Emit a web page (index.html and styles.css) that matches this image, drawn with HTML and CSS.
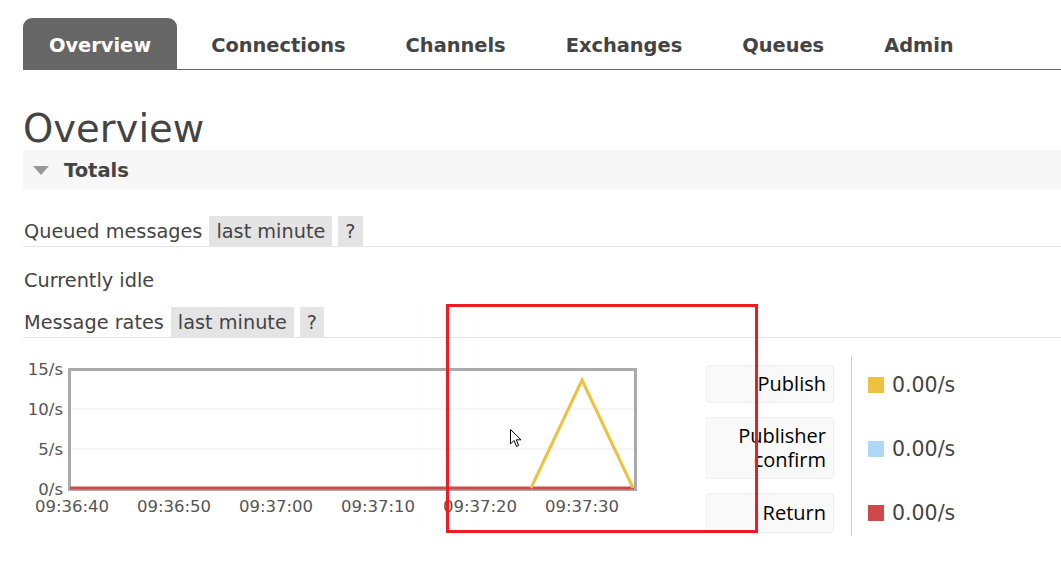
FILE: index.html
```html
<!DOCTYPE html>
<html>
<head>
<meta charset="utf-8">
<link rel="stylesheet" href="styles.css">
</head>
<body>
<div class="page">
  <ul class="tabs">
    <li class="tab active">Overview</li>
    <li class="tab">Connections</li>
    <li class="tab">Channels</li>
    <li class="tab">Exchanges</li>
    <li class="tab">Queues</li>
    <li class="tab">Admin</li>
  </ul>
  <h1 class="title">Overview</h1>
  <div class="section-head"><span class="tri"></span><span class="section-name">Totals</span></div>

  <div class="row row-queued"><span class="label">Queued messages</span><span class="badge">last minute</span><span class="badge q">?</span></div>
  <div class="idle">Currently idle</div>
  <div class="row"><span class="label">Message rates</span><span class="badge">last minute</span><span class="badge q">?</span></div>

  <div class="chart-row">
    <svg class="chart" width="666" height="170" viewBox="0 0 666 170">
      <line x1="46" y1="55" x2="610" y2="55" stroke="#ececec" stroke-width="1"/>
      <line x1="46" y1="95" x2="610" y2="95" stroke="#ececec" stroke-width="1"/>
      <rect x="45.5" y="15.5" width="566" height="120" fill="none" stroke="#aaaaaa" stroke-width="3"/>
      <line x1="46" y1="134" x2="610" y2="134" stroke="#cb4b4b" stroke-width="3"/>
      <polyline points="507,134 558,26 609,134" fill="none" stroke="#edc240" stroke-width="3" stroke-linejoin="miter"/>
      <g class="ylab" text-anchor="end">
        <text x="39" y="21">15/s</text>
        <text x="39" y="61">10/s</text>
        <text x="39" y="101">5/s</text>
        <text x="39" y="141">0/s</text>
      </g>
      <g class="xlab" text-anchor="middle">
        <text x="48" y="158">09:36:40</text>
        <text x="150" y="158">09:36:50</text>
        <text x="252" y="158">09:37:00</text>
        <text x="354" y="158">09:37:10</text>
        <text x="456" y="158">09:37:20</text>
        <text x="558" y="158">09:37:30</text>
      </g>
    </svg>
    <div class="legend">
      <div class="lbtn b1">Publish</div>
      <div class="lbtn b2"><span>Publisher</span><span>confirm</span></div>
      <div class="lbtn b3">Return</div>
    </div>
    <div class="values">
      <div class="val v1"><span class="sw yellow"></span>0.00/s</div>
      <div class="val v2"><span class="sw blue"></span>0.00/s</div>
      <div class="val v3"><span class="sw red"></span>0.00/s</div>
    </div>
  </div>
</div>

<div class="annot"></div>
<svg class="cursor" width="13" height="19" viewBox="0 0 13 19">
  <path d="M0.5 0.5 L0.5 15 L4 11.5 L6.5 17.5 L8.7 16.6 L6.3 10.8 L11 10.8 Z" fill="#ffffff" stroke="#000000" stroke-width="1" stroke-linejoin="round"/>
</svg>
</body>
</html>
```

FILE: styles.css
```css
html, body {
  margin: 0;
  padding: 0;
  background: #ffffff;
}
body {
  font-family: "DejaVu Sans", Verdana, sans-serif;
  color: #444444;
  position: relative;
  width: 1061px;
  height: 566px;
  overflow: hidden;
}
.page {
  padding-left: 23px;
  padding-top: 18px;
}
.tabs {
  list-style: none;
  margin: 0;
  padding: 0;
  display: flex;
  gap: 8px;
  height: 51px;
  border-bottom: 1px solid #666666;
}
.tab {
  padding: 3px 26px 0;
  box-sizing: border-box;
  font-weight: bold;
  font-size: 19.4px;
  color: #444444;
  display: flex;
  align-items: center;
  height: 51px;
  border-radius: 9px 9px 0 0;
}
.tab.active {
  background: #666666;
  color: #ffffff;
}
.title {
  margin: 0;
  font-weight: normal;
  font-size: 38.5px;
  line-height: 44px;
  height: 44px;
  margin-top: 37px;
  color: #444444;
}
.section-head {
  margin-top: -1px;
  background: #f7f7f7;
  height: 40px;
  display: flex;
  align-items: center;
}
.tri {
  width: 0;
  height: 0;
  border-left: 8px solid transparent;
  border-right: 8px solid transparent;
  border-top: 9px solid #999999;
  margin-left: 10px;
  margin-right: 15px;
  margin-top: 1px;
}
.section-name {
  font-weight: bold;
  font-size: 19.5px;
  color: #444444;
}
.row {
  display: flex;
  align-items: stretch;
  height: 30px;
  border-bottom: 1px solid #e4e4e4;
  font-size: 19.3px;
}
.row-queued {
  margin-top: 26px;
}
.label {
  display: flex;
  align-items: center;
  padding-left: 1px;
  margin-right: 7px;
}
.badge {
  background: #e4e4e4;
  display: flex;
  align-items: center;
  padding: 0 7px;
  margin-right: 6px;
}
.idle {
  font-size: 19.3px;
  height: 30px;
  display: flex;
  align-items: center;
  margin-top: 18px;
  padding-left: 1px;
  margin-bottom: 12px;
}
.chart-row {
  display: flex;
  margin-top: 16px;
}
.chart {
  display: block;
  margin-left: 1px;
  flex: none;
}
.chart text {
  font-family: "DejaVu Sans", Verdana, sans-serif;
  font-size: 16.5px;
  fill: #555555;
}
.legend {
  margin-left: 16px;
  margin-top: 11px;
  width: 128px;
  display: flex;
  flex-direction: column;
  gap: 14px;
}
.lbtn {
  box-sizing: border-box;
  background: #f9f9f9;
  border: 1px solid #eeeeee;
  border-radius: 4px;
  text-align: right;
  padding: 0 7px;
  font-family: "Open Sans", "Noto Sans", sans-serif;
  font-size: 20px;
  color: #000000;
  display: flex;
  flex-direction: column;
  justify-content: center;
  align-items: flex-end;
  line-height: 24px;
}
.b1 { height: 38px; }
.b2 { height: 62px; }
.b3 { height: 40px; }
.values {
  margin-left: 17px;
  border-left: 1px solid #cccccc;
  height: 180px;
  margin-top: 2px;
  padding-left: 16px;
  display: flex;
  flex-direction: column;
}
.val {
  display: flex;
  align-items: center;
  font-size: 20.5px;
  color: #444444;
  height: 24px;
}
.v1 { margin-top: 17px; }
.v2 { margin-top: 40px; }
.v3 { margin-top: 40px; }
.sw {
  width: 16px;
  height: 16px;
  margin-right: 8px;
  flex: none;
}
.yellow { background: #edc240; }
.blue { background: #afd8f8; }
.red { background: #cb4b4b; }
.annot {
  position: absolute;
  left: 446px;
  top: 304px;
  width: 306px;
  height: 223px;
  border: 3px solid #ed1c24;
}
.cursor {
  position: absolute;
  left: 510px;
  top: 429px;
}
```
